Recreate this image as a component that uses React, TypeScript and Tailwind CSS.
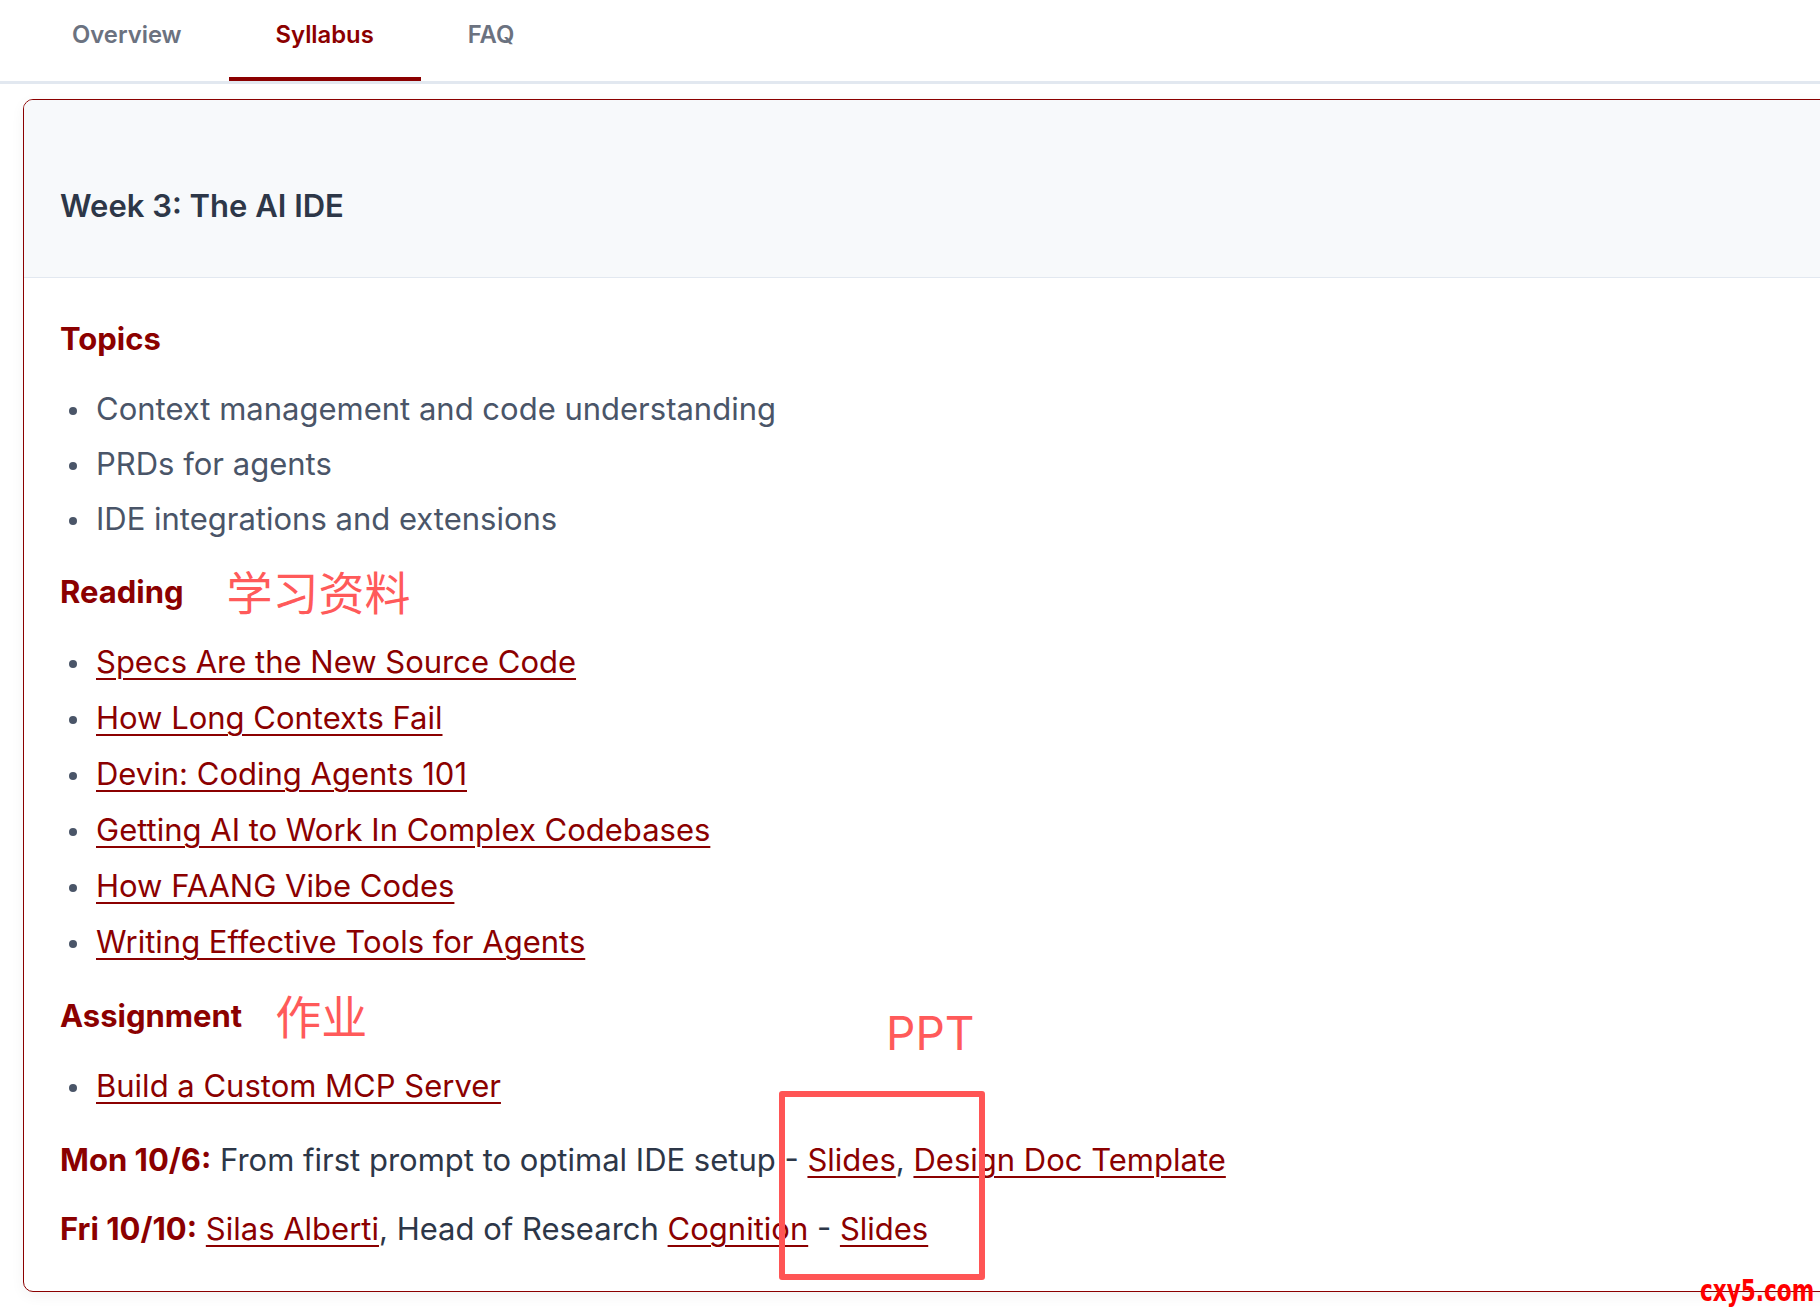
import React from 'react';

const tabs = ['Overview', 'Syllabus', 'FAQ'];

const topics = [
  'Context management and code understanding',
  'PRDs for agents',
  'IDE integrations and extensions',
];

const readings = [
  'Specs Are the New Source Code',
  'How Long Contexts Fail',
  'Devin: Coding Agents 101',
  'Getting AI to Work In Complex Codebases',
  'How FAANG Vibe Codes',
  'Writing Effective Tools for Agents',
];

const Link = ({ children }: { children: React.ReactNode }) => (
  <a href="#" className="text-[#8b0000] underline decoration-2 underline-offset-[5px]">
    {children}
  </a>
);

const Bullet = ({ children }: { children: React.ReactNode }) => (
  <li className="flex items-center h-[48px]">
    <span className="ml-[9px] mr-[19px] w-[8px] h-[8px] rounded-full bg-[#4a5568] shrink-0 translate-y-[2px]" />
    <span>{children}</span>
  </li>
);

const SectionTitle = ({ title, note, gap, top }: { title: string; note?: string; gap?: string; top?: string }) => (
  <h3 className={`flex items-center h-[40px] text-[31px] font-bold text-[#8b0000] mb-[26px] ${top ?? ''}`}>
    {title}
    {note && (
      <span
        className={`font-['Noto_Sans_CJK_SC',sans-serif] font-normal text-[46px] leading-none text-[#ff5a5a] -translate-y-[2px] ${gap}`}
      >
        {note}
      </span>
    )}
  </h3>
);

export default function App() {
  return (
    <div className="relative w-[1820px] h-[1312px] overflow-hidden bg-white font-['Inter',sans-serif]">
      {/* tabs */}
      <div className="flex pl-[25px] border-b-[3px] border-[#e2e8f0]">
        {tabs.map(t => (
          <button
            key={t}
            className={`px-[47px] pt-[19px] pb-[26px] text-[23.8px] leading-[32px] font-semibold border-b-4 ${
              t === 'Syllabus' ? 'text-[#8b0000] border-[#8b0000]' : 'text-[#6b7280] border-transparent'
            }`}
          >
            {t}
          </button>
        ))}
      </div>

      {/* week card */}
      <div className="pl-[23px] pt-[15px]">
        <div className="w-[1840px] border border-[#8b0000] rounded-[10px] overflow-hidden bg-white shadow-[0_4px_14px_rgba(0,0,0,0.05)]">
          <div className="bg-[#f7f9fb] border-b border-[#e2e8f0] pl-[36px] pt-[86px] pb-[51px]">
            <h2 className="text-[31px] leading-[40px] font-semibold text-[#2d3748]">Week 3: The AI IDE</h2>
          </div>

          <div className="pl-[36px] pt-[41px] pb-[38px] text-[31px] leading-[48px] text-[#4a5568]">
            <SectionTitle title="Topics" />
            <ul className="flex flex-col gap-[7px]">
              {topics.map(t => (
                <Bullet key={t}>{t}</Bullet>
              ))}
            </ul>

            <SectionTitle title="Reading" note="学习资料" gap="ml-[43px]" top="mt-[29px]" />
            <ul className="flex flex-col gap-[8px]">
              {readings.map(r => (
                <Bullet key={r}>
                  <Link>{r}</Link>
                </Bullet>
              ))}
            </ul>

            <SectionTitle title="Assignment" note="作业" gap="ml-[33px]" top="mt-[30px]" />
            <ul className="flex flex-col gap-[8px]">
              <Bullet>
                <Link>Build a Custom MCP Server</Link>
              </Bullet>
            </ul>

            <p className="mt-[26px] text-[#2d3748]">
              <span className="font-bold text-[#8b0000]">Mon 10/6:</span> From first prompt to optimal IDE setup -{' '}
              <Link>Slides</Link>, <Link>Design Doc Template</Link>
            </p>
            <p className="mt-[21px] text-[#2d3748]">
              <span className="font-bold text-[#8b0000]">Fri 10/10:</span> <Link>Silas Alberti</Link>, Head of Research{' '}
              <Link>Cognition</Link> - <Link>Slides</Link>
            </p>
          </div>
        </div>
      </div>

      {/* annotations */}
      <span className="absolute left-[886px] top-[1005px] text-[46px] leading-[56px] text-[#ff5a5a]">PPT</span>
      <div className="absolute left-[779px] top-[1091px] w-[206px] h-[189px] border-[6px] border-[#ff5555] rounded-[3px]" />

      {/* watermark */}
      <span className="absolute left-[1700px] top-[1273px] origin-left scale-x-[0.8] font-['DejaVu_Sans_Condensed',sans-serif] font-bold text-[30px] leading-[36px] text-[#ff0000] whitespace-nowrap">
        cxy5.com
      </span>
    </div>
  );
}
